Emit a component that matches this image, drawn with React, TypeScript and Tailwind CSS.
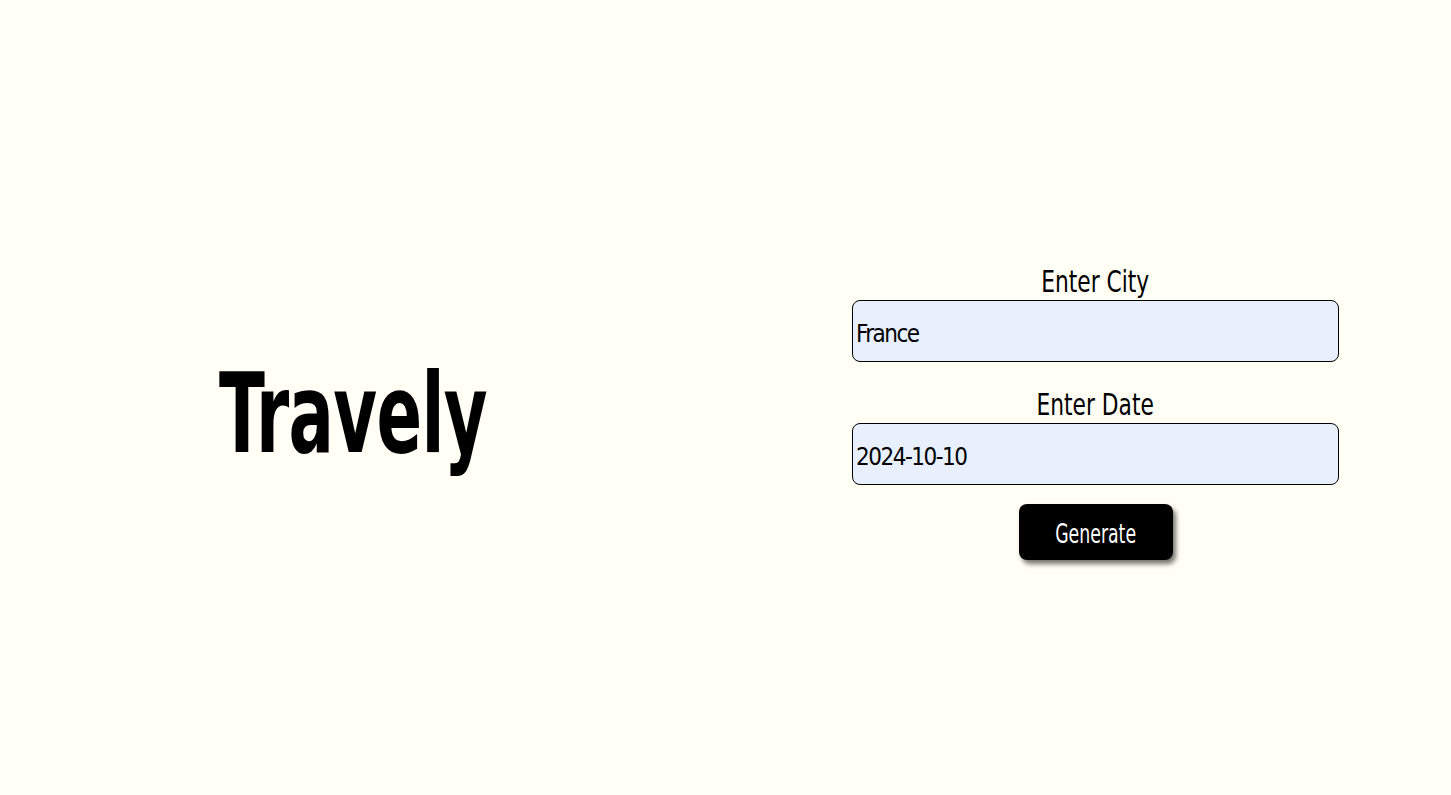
export default function App() {
  return (
    <div
      className="min-h-screen w-full bg-[#fffff5] flex items-center pt-[27px] text-black"
      style={{ fontFamily: '"Liberation Sans Narrow", "DejaVu Sans Condensed", "Liberation Sans", sans-serif' }}
    >
      <div className="w-[707px] flex justify-center pt-[6px]">
        <h1 className="text-[110px] leading-none font-bold tracking-[-1px] scale-x-[0.68]">Travely</h1>
      </div>

      <form className="ml-[145px] w-[487px] flex flex-col items-center">
        <label htmlFor="city" className="text-[31px] leading-[38px] scale-x-[0.78]">
          Enter City
        </label>
        <input
          id="city"
          defaultValue="France"
          className="w-full h-[62px] rounded-lg border border-black bg-[#e8f0fe] px-[3px] pt-[5px] text-[24px] tracking-[-1.5px] outline-none"
        />
        <label htmlFor="date" className="mt-[23px] text-[31px] leading-[38px] scale-x-[0.78]">
          Enter Date
        </label>
        <input
          id="date"
          defaultValue="2024-10-10"
          className="w-full h-[62px] rounded-lg border border-black bg-[#e8f0fe] px-[3px] pt-[5px] text-[24px] tracking-[-1.5px] outline-none"
        />
        <button
          type="button"
          className="mt-[19px] w-[154px] h-[56px] rounded-lg bg-black text-white text-[26px] pt-[5px] shadow-[3px_4px_5px_rgba(0,0,0,0.55)]"
        >
          <span className="inline-block scale-x-[0.74]">Generate</span>
        </button>
      </form>
    </div>
  );
}
